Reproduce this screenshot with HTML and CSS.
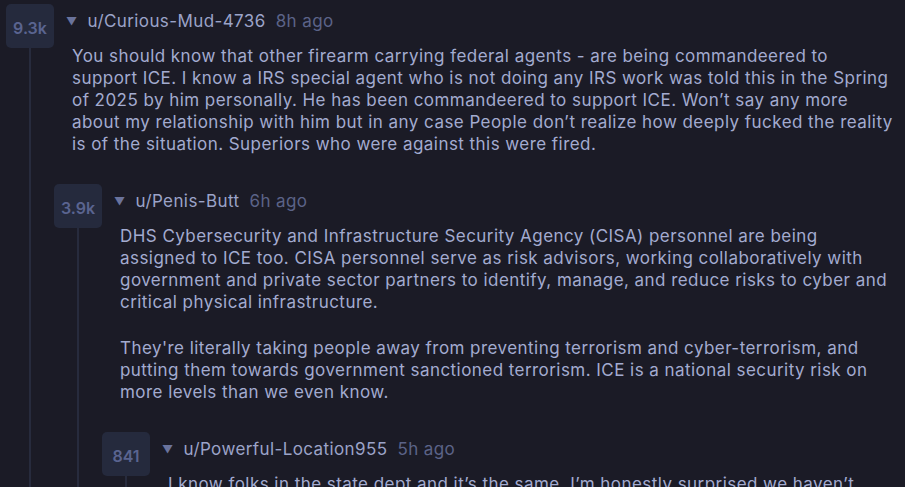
FILE: index.html
```html
<!DOCTYPE html>
<html>
<head>
<meta charset="utf-8">
<link rel="stylesheet" href="styles.css">
</head>
<body>
<div class="thread">
  <div class="comment">
    <div class="rail">
      <div class="score">9.3k</div>
      <div class="line"></div>
    </div>
    <div class="content">
      <div class="meta">
        <span class="toggle">▼</span>
        <span class="user">u/Curious-Mud-4736</span>
        <span class="time">8h ago</span>
      </div>
      <div class="body">
        <p>You should know that other firearm carrying federal agents - are being commandeered to support ICE. I know a IRS special agent who is not doing any IRS work was told this in the Spring of 2025 by him personally. He has been commandeered to support ICE. Won’t say any more about my relationship with him but in any case People don’t realize how deeply fucked the reality is of the situation. Superiors who were against this were fired.</p>
      </div>
      <div class="replies">
        <div class="comment">
          <div class="rail">
            <div class="score">3.9k</div>
            <div class="line"></div>
          </div>
          <div class="content">
            <div class="meta">
              <span class="toggle">▼</span>
              <span class="user">u/Penis-Butt</span>
              <span class="time">6h ago</span>
            </div>
            <div class="body">
              <p>DHS Cybersecurity and Infrastructure Security Agency (CISA) personnel are being assigned to ICE too. CISA personnel serve as risk advisors, working collaboratively with government and private sector partners to identify, manage, and reduce risks to cyber and critical physical infrastructure.</p>
              <p>They're literally taking people away from preventing terrorism and cyber-terrorism, and putting them towards government sanctioned terrorism. ICE is a national security risk on more levels than we even know.</p>
            </div>
            <div class="replies">
              <div class="comment">
                <div class="rail">
                  <div class="score">841</div>
                  <div class="line"></div>
                </div>
                <div class="content">
                  <div class="meta">
                    <span class="toggle">▼</span>
                    <span class="user">u/Powerful-Location955</span>
                    <span class="time">5h ago</span>
                  </div>
                  <div class="body">
                    <p>I know folks in the state dept and it’s the same. I’m honestly surprised we haven’t heard more about it yet, but people are scared to talk.</p>
                  </div>
                </div>
              </div>
            </div>
          </div>
        </div>
      </div>
    </div>
  </div>
</div>
</body>
</html>
```
FILE: styles.css
```css
html, body {
  margin: 0;
  padding: 0;
  background: #1b1b26;
  overflow: hidden;
}
body {
  font-family: Inter, "Noto Sans", sans-serif;
  color: #a3abd0;
}
.thread {
  padding: 4px 0 0 6px;
}
.comment {
  display: grid;
  grid-template-columns: 48px 1fr;
}
.rail {
  display: flex;
  flex-direction: column;
  align-items: center;
}
.score {
  width: 48px;
  height: 44px;
  border-radius: 5px;
  background: #252a3d;
  color: #5a6490;
  font-weight: 600;
  font-size: 16px;
  display: flex;
  align-items: center;
  justify-content: center;
  padding-top: 4px;
  box-sizing: border-box;
  flex: none;
}
.line {
  flex: 1;
  width: 2px;
  background: #272b3d;
}
.meta {
  display: flex;
  align-items: center;
  height: 34px;
  padding-left: 12px;
  font-size: 17px;
  letter-spacing: 0.4px;
}
.toggle {
  font-size: 11px;
  color: #6a739c;
  margin-right: 10px;
}
.user {
  color: #9ba3c8;
  margin-right: 10px;
}
.time {
  color: #5b6388;
}
.body {
  padding: 7px 12px 0 18px;
  font-size: 17px;
  letter-spacing: 0.45px;
  line-height: 22px;
  margin-bottom: 29px;
}
.body p {
  margin: 0 0 24px;
}
.body p:last-child {
  margin-bottom: 0;
}
```
